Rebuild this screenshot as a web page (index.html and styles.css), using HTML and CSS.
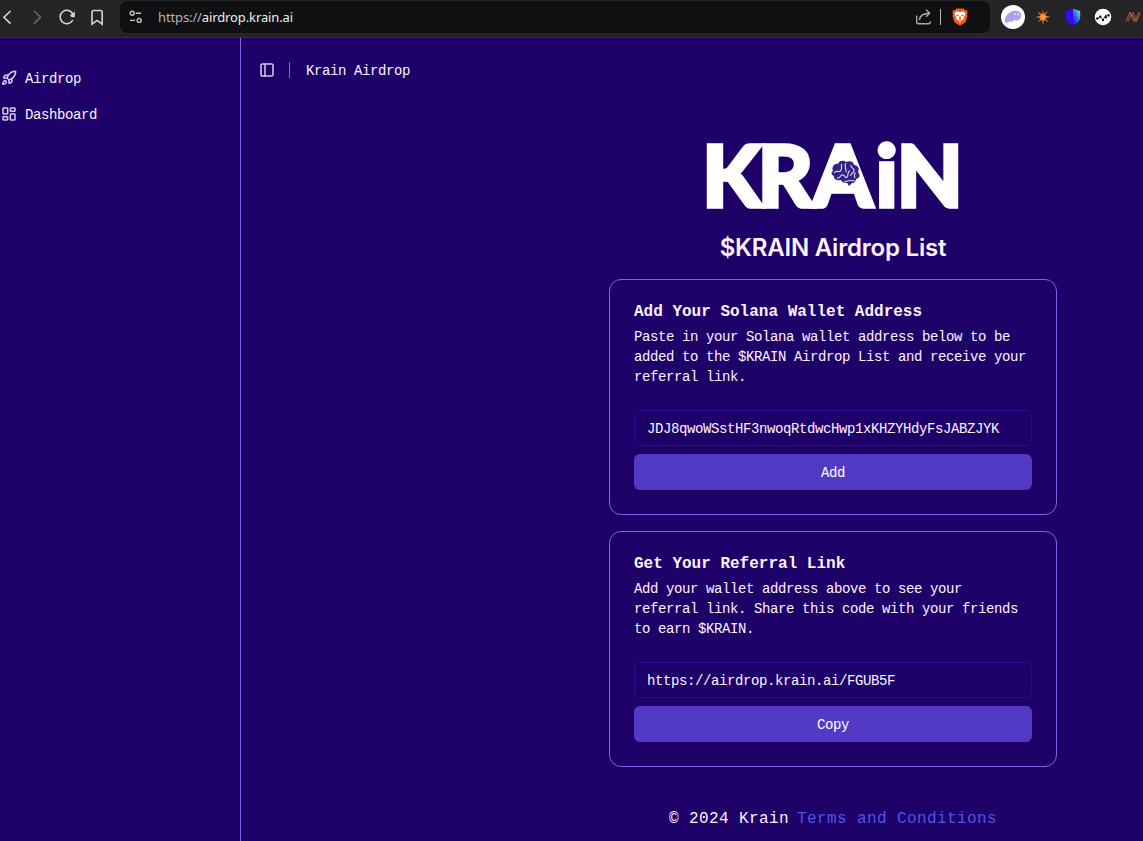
FILE: index.html
```html
<!DOCTYPE html>
<html lang="en">
<head>
	<meta charset="UTF-8">
	<title>Krain Airdrop</title>
	<link rel="stylesheet" href="styles.css">
</head>
<body>
	<div class="toolbar">
		<div class="nav">
			<svg width="20" height="20" viewBox="0 0 20 20"><path d="M13.500 4 7 10.300l6.500 6.300"/></svg>
			<svg class="dim" width="20" height="20" viewBox="0 0 20 20"><path d="m7 4 6.500 6.300L7 16.600"/></svg>
			<svg width="20" height="20" viewBox="0 0 20 20"><path d="M15.800 13A6.700 6.700 0 1 1 16 7.500"/><path class="solid" d="M17.800 4.500v5a.7.7 0 0 1-.7.700h-2a2.500 2.500 0 0 1-2-2z"/></svg>
			<svg width="20" height="20" viewBox="0 0 20 20"><path d="M5 5.200a1.700 1.700 0 0 1 1.700-1.700h6.800a1.700 1.700 0 0 1 1.700 1.700v11.900l-5.100-3.700L5 17.100z"/></svg>
		</div>
		<div class="address">
			<svg class="tune" width="14" height="14" viewBox="0 0 14 14"><circle cx="3.200" cy="3.300" r="2"/><path d="M6.800 3.300h5.200M1 10.400h5"/><circle cx="10.200" cy="10.400" r="2"/></svg>
			<span class="url">https://<b>airdrop.krain.ai</b></span>
			<svg class="share" width="18" height="18" viewBox="0 0 18 18"><path d="M1.700 7.500v6.800a1.500 1.500 0 0 0 1.500 1.500h10.600a1.500 1.500 0 0 0 1.500-1.500v-1M4.500 12c.5-4.500 3.500-6.700 10-6.700M11 1.800l3.700 3.500L11 8.800"/></svg>
			<i class="sep"></i>
			<svg class="lion" width="16" height="18" viewBox="0 0 16 18"><path fill="#f25a18" d="M4.500.4h7L13 2l1.700.3 1 2.300-.6 1.700.4 1.500-1.900 6.500L8 17.800l-5.600-3.500L.5 7.800l.4-1.500-.6-1.700 1-2.300L3 2z"/><path fill="#fff" d="m4.300 3.300 3.700.8 3.700-.8 2 2.600-2.200 3.800.3 1.500-2 .9L8 14.500l-1.800-2.400-2-.9.300-1.500-2.200-3.800z"/><path fill="#f25a18" d="m3.800 6.500 3 .7-.3 1.100-1.800-.4zM12.200 6.500l-3 .7.300 1.100 1.800-.4zM7.300 8h1.400l-.2 2 .9.700L8 11.500l-1.400-.8.900-.7zM6.700 12.400 8 12l1.300.4L8 13.300z"/></svg>
		</div>
		<div class="extensions">
			<svg width="24" height="24" viewBox="0 0 24 24"><circle cx="12" cy="12" r="12" fill="#fff"/><path fill="#ab9ff2" d="M3.800 16.600C3 12.500 7 6 14.300 5.700c4-.2 6 2 5.900 4.700-.1 3.200-2.400 5-4.600 5-.9 0-1.500-.4-1.800-.9-.8 1.300-2.200 2.200-3.300 2.200-.8 0-1.200-.4-1.300-1-1 1.300-2.100 2.100-3.300 2.100-1.200 0-1.900-.5-2.100-1.200z"/><path class="eyes" d="M14 8.500v1.600M17 8.500v1.600"/></svg>
			<svg width="16" height="16" viewBox="0 0 16 16"><path fill="#ef7d1a" d="m8 .2.700 5 3.900-3.300-2.500 4.500L15.800 8l-5.600 1 3.300 4.300-4.500-2.600-1 5.100-1.100-5.100-3.700 2.800 2.500-4.300L.2 8l5.500-1L2.500 2.700l4.600 2.600z"/><circle cx="8" cy="8" r="2.600" fill="#ff9b38"/></svg>
			<svg class="shield" width="16" height="18" viewBox="0 0 16 18"><path fill="#3a08f5" d="M.8 3 8 .7v16.600C4.500 16 .8 13 .8 9z"/><path fill="url(#shield)" d="m8 .7 7.200 2.300v6c0 4-3.700 7-7.200 8.300z"/><defs><linearGradient id="shield" x1=".1" y1=".9" x2=".8" y2="0"><stop offset="0" stop-color="#1c10f5"/><stop offset=".5" stop-color="#2f78ee"/><stop offset="1" stop-color="#5bebad"/></linearGradient></defs></svg>
			<svg width="18" height="18" viewBox="0 0 18 18"><circle cx="9" cy="9" r="8.300" fill="#fff"/><path fill="none" stroke="#333" stroke-width=".9" d="m3.300 10.500 3-1.500 2.700 3 2.700-5 3 1"/><g fill="#111"><circle cx="3.300" cy="10.500" r="1.200"/><circle cx="6.300" cy="8.800" r="1.200"/><circle cx="9" cy="12" r="1.200"/><circle cx="11.900" cy="9.300" r="1.200"/><circle cx="14.500" cy="7.200" r="1.200"/></g></svg>
			<svg class="last" width="16" height="14" viewBox="0 0 16 14"><path fill="none" stroke="#a85e42" stroke-width="1" d="m1 11.500 4-9.500 3.500 9.500M3 11.500 6.600 3l3.500 8.500L14 2M8 2l3.500 9.500L15.300 2.500"/></svg>
		</div>
	</div>

	<div class="page">
		<div class="sidebar">
			<a class="item">
				<svg class="icon" width="16" height="16" viewBox="0 0 24 24"><path d="M4.500 16.500c-1.500 1.260-2 5-2 5s3.740-.5 5-2c.71-.84.7-2.130-.09-2.910a2.180 2.180 0 0 0-2.910-.09z"/><path d="m12 15-3-3a22 22 0 0 1 2-3.950A12.880 12.880 0 0 1 22 2c0 2.720-.78 7.500-6 11a22.350 22.350 0 0 1-4 2z"/><path d="M9 12H4s.55-3.030 2-4c1.620-1.080 5 0 5 0M12 15v5s3.030-.55 4-2c1.080-1.620 0-5 0-5"/></svg>
				<span>Airdrop</span>
			</a>
			<a class="item">
				<svg class="icon" width="16" height="16" viewBox="0 0 24 24"><rect width="7" height="9" x="3" y="3" rx="1"/><rect width="7" height="5" x="14" y="3" rx="1"/><rect width="7" height="9" x="14" y="12" rx="1"/><rect width="7" height="5" x="3" y="16" rx="1"/></svg>
				<span>Dashboard</span>
			</a>
		</div>

		<div class="main">
			<div class="header">
				<svg class="icon" width="16" height="16" viewBox="0 0 24 24"><rect width="18" height="18" x="3" y="3" rx="2"/><path d="M9 3v18"/></svg>
				<i class="divider"></i>
				<span>Krain Airdrop</span>
			</div>

			<div class="content">
				<svg class="logo" width="256" height="72" viewBox="0 0 256 72">
					<text y="67.500" x="-3 52.500 107.500 170.500 191.500">KRAiN</text>
					<path fill="#fff" d="M135 12h8l12 42h-32z"/>
					<g class="brain">
						<path class="lobe" d="M128 32c-2-4 2-8 5-7 1-4 6-4 8-2 4-2 8 0 8 3 4 0 6 4 4 7 3 3 1 7-2 7 0 4-4 5-7 3-3 2-7 1-8-2-4 1-8-1-7-4-3-1-3-4-1-5z"/>
						<path class="lobe" d="m141 42 7 1-4 4z"/>
						<path class="fold" d="M129 34c3-4 5 1 7-3s-1-4 1-6M132 39c4 1 3-4 6-3s2 4 4 2 0-6 3-6M141 24c-3 4 1 5 0 9M146 26c-1 4 4 2 3 6s-4 1-3 5M151 34c-2 0-2 3-1 5M139 43c4-2 7-2 11-1"/>
					</g>
				</svg>
				<h1>$KRAIN Airdrop List</h1>

				<div class="card">
					<h2>Add Your Solana Wallet Address</h2>
					<p>Paste in your Solana wallet address below to be added to the $KRAIN Airdrop List and receive your referral link.</p>
					<input type="text" value="JDJ8qwoWSstHF3nwoqRtdwcHwp1xKHZYHdyFsJABZJYK">
					<button>Add</button>
				</div>

				<div class="card">
					<h2>Get Your Referral Link</h2>
					<p>Add your wallet address above to see your referral link. Share this code with your friends to earn $KRAIN.</p>
					<input type="text" value="https://airdrop.krain.ai/FGUB5F">
					<button>Copy</button>
				</div>

				<div class="footer">
					<span>© 2024 Krain</span>
					<a>Terms and Conditions</a>
				</div>
			</div>
		</div>
	</div>
</body>
</html>
```

FILE: styles.css
```css
*{
	margin: 0;
	padding: 0;
	box-sizing: border-box;
}
body{
	height: 841px;
	overflow: hidden;
	background-color: #1e0069;
	color: #fdf2ff;
	font-family: "Liberation Mono", monospace;
	font-size: 14px;
	letter-spacing: -0.4px;
}
svg{
	display: block;
	flex-shrink: 0;
}
/* browser toolbar */
.toolbar{
	display: flex;
	height: 38px;
	padding-top: 1px;
	background-color: #242427;
	border-bottom: 1px solid #323039;
}
.nav{
	display: flex;
	gap: 10px;
	width: 120px;
	padding-top: 6px;
	margin-left: -3px;
	margin-right: 3px;
}
.nav svg{
	fill: none;
	stroke: #d4d4d6;
	stroke-width: 1.6;
}
.nav .dim{
	stroke: #69696d;
}
.nav .solid{
	fill: #d4d4d6;
	stroke: none;
}
.address{
	display: flex;
	align-items: center;
	width: 870px;
	height: 32px;
	padding: 0 22px 0 9px;
	border-radius: 8px;
	background-color: #101012;
}
.tune{
	fill: none;
	stroke: #c7c7ca;
	stroke-width: 1.4;
}
.url{
	flex: 1;
	margin-left: 15px;
	font-family: "Noto Sans", sans-serif;
	font-size: 13px;
	letter-spacing: -0.12px;
	color: #b4b4b7;
}
.url b{
	font-weight: normal;
	color: #ececee;
}
.share{
	fill: none;
	stroke: #a9a9ac;
	stroke-width: 1.4;
}
.sep{
	width: 1px;
	height: 16px;
	margin: 0 11px 0 7px;
	background-color: #b8b8bb;
}
.extensions{
	display: flex;
	align-items: center;
	gap: 14px;
	height: 32px;
	margin-left: 11px;
}
.extensions svg:first-child{
	margin-right: -4px;
}
.extensions .shield{
	margin-right: -1px;
}
.extensions .last{
	margin-left: -1px;
}
.eyes{
	stroke: #fff;
	stroke-width: 1.5;
}
/* page */
.page{
	display: flex;
	height: 803px;
}
.icon{
	fill: none;
	stroke: #d9c6f5;
	stroke-width: 2.3;
	stroke-linecap: round;
	stroke-linejoin: round;
}
.sidebar{
	display: flex;
	flex-direction: column;
	gap: 4px;
	width: 241px;
	padding-top: 24px;
	border-right: 1px solid #8561e8;
}
.item{
	display: flex;
	align-items: center;
	gap: 8px;
	height: 32px;
	padding-left: 1px;
}
.item span,
.header span{
	padding-top: 2px;
}
.main{
	flex: 1;
}
.header{
	display: flex;
	align-items: center;
	height: 64px;
	padding-left: 18px;
}
.divider{
	width: 1px;
	height: 16px;
	margin: 0 16px 0 14px;
	background-color: #8561e8;
}
.content{
	display: flex;
	flex-direction: column;
	align-items: center;
	padding-top: 37px;
	padding-left: 282px;
}
.logo{
	overflow: visible;
}
.logo text{
	fill: #fff;
	stroke: #fff;
	stroke-width: 3.4;
	font-family: Lato, sans-serif;
	font-size: 86px;
	font-weight: 900;
	letter-spacing: 0;
}
.lobe{
	fill: #342287;
}
.fold{
	fill: none;
	stroke: #e2ddf3;
	stroke-width: 1.1;
}
h1{
	margin: 21px 0 15px;
	font-family: Inter, sans-serif;
	font-size: 24px;
	line-height: 32px;
	font-weight: 600;
	letter-spacing: -0.2px;
}
.card{
	display: flex;
	flex-direction: column;
	width: 448px;
	height: 236px;
	margin-bottom: 16px;
	padding: 24px;
	border: 1px solid #8561e8;
	border-radius: 12px;
}
.card h2{
	font-size: 16px;
	line-height: 16px;
	letter-spacing: 0;
}
.card p{
	margin: 7px 0 23px;
	line-height: 20px;
}
.card input{
	height: 36px;
	padding: 2px 12px 0;
	border: 1px solid #2c0a9c;
	border-radius: 6px;
	background: transparent;
	color: inherit;
	font: inherit;
	letter-spacing: inherit;
}
.card button{
	height: 36px;
	margin-top: 8px;
	padding-top: 2px;
	border: 0;
	border-radius: 6px;
	background-color: #523bc4;
	color: #fff;
	font: inherit;
	letter-spacing: inherit;
}
.footer{
	display: flex;
	gap: 8px;
	margin-top: 24px;
	font-size: 16px;
	line-height: 24px;
	letter-spacing: 0.4px;
}
.footer a{
	color: #4f55e8;
}
```
